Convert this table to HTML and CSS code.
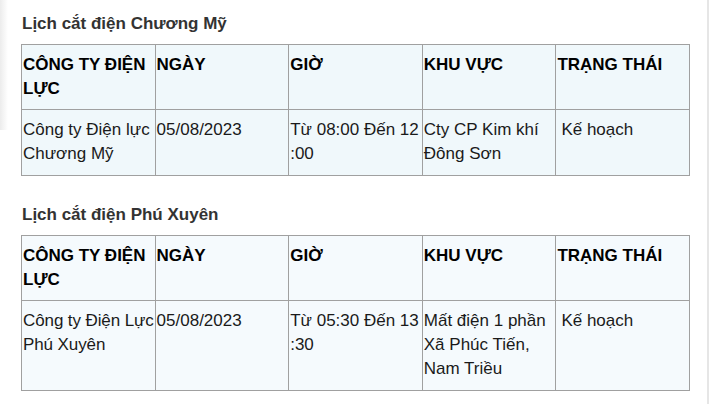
FILE: index.html
```html
<!DOCTYPE html>
<html lang="vi">
<head>
<meta charset="utf-8">
<link rel="stylesheet" href="styles.css">
</head>
<body>
<div class="page">
  <section class="block">
    <h3 class="title">Lịch cắt điện Chương Mỹ</h3>
    <table class="grid grid-a">
      <tr>
        <th>CÔNG TY ĐIỆN LỰC</th>
        <th>NGÀY</th>
        <th>GIỜ</th>
        <th>KHU VỰC</th>
        <th>TRẠNG THÁI</th>
      </tr>
      <tr>
        <td>Công ty Điện lực Chương Mỹ</td>
        <td>05/08/2023</td>
        <td>Từ 08:00 Đến 12 :00</td>
        <td>Cty CP Kim khí Đông Sơn</td>
        <td class="status">Kế hoạch</td>
      </tr>
    </table>
  </section>
  <section class="block">
    <h3 class="title">Lịch cắt điện Phú Xuyên</h3>
    <table class="grid grid-b">
      <tr>
        <th>CÔNG TY ĐIỆN LỰC</th>
        <th>NGÀY</th>
        <th>GIỜ</th>
        <th>KHU VỰC</th>
        <th>TRẠNG THÁI</th>
      </tr>
      <tr>
        <td class="tight">Công ty Điện Lực<br>Phú Xuyên</td>
        <td>05/08/2023</td>
        <td>Từ 05:30 Đến 13 :30</td>
        <td>Mất điện 1 phần Xã Phúc Tiến, Nam Triều</td>
        <td class="status">Kế hoạch</td>
      </tr>
    </table>
  </section>
</div>
</body>
</html>
```
FILE: styles.css
```css
html {
  background: #fff linear-gradient(to right, #ececec, #fff 8px) no-repeat 0 0 / 8px 130px;
}
body {
  margin: 0;
  font-family: "Liberation Sans", Arial, sans-serif;
  color: #222;
}
.page {
  width: 709px;
  min-height: 404px;
  box-sizing: border-box;
  border-right: 2px solid #e6e6e6;
  padding: 14px 0 0 21px;
}
.block {
  margin-bottom: 29px;
}
.title {
  margin: 0 0 10px 1px;
  font-size: 17px;
  line-height: 20px;
  font-weight: bold;
  color: #333;
}
.grid {
  width: 669px;
  border-collapse: collapse;
  table-layout: fixed;
  border: 1px solid #a0a0a0;
  font-size: 17px;
  line-height: 24px;
}
.grid-a { background: #f0f8fb; }
.grid-b { background: #f5fafd; }
.grid th,
.grid td {
  border: 1px solid #a0a0a0;
  vertical-align: top;
  text-align: left;
  padding: 8px 1px 8px 1px;
}
.grid th {
  font-weight: bold;
  color: #000;
}
.grid td {
  padding-bottom: 9px;
  color: #1a1a1a;
}
.grid td.tight {
  white-space: nowrap;
  padding-right: 0;
  letter-spacing: -0.1px;
}
.grid td.status {
  padding-left: 5px;
}
```
